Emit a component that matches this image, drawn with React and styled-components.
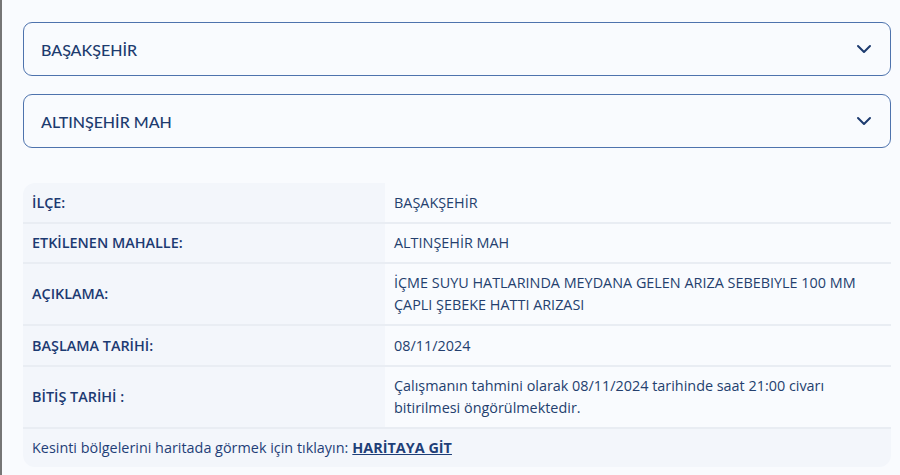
import React from 'react';
import styled, { createGlobalStyle } from 'styled-components';

const GlobalStyle = createGlobalStyle`
  body {
    margin: 0;
    background: #f9fbfe;
    font-family: 'Lato', 'Inter', sans-serif;
  }
`;

const Page = styled.div`
  min-height: 475px;
  box-sizing: border-box;
  border-left: 2px solid #767676;
  padding: 22px 9px 0 21px;
  background: #f9fbfe;
`;

const Select = styled.div`
  display: flex;
  align-items: center;
  justify-content: space-between;
  height: 54px;
  box-sizing: border-box;
  border: 1.5px solid #4e73ad;
  border-radius: 9px;
  padding: 0 18px 0 17px;
  margin-bottom: 18px;
  color: #1d3b6f;
  font-size: 16px;
  font-weight: 500;
`;

const Chevron = () => (
  <svg width="16" height="10" viewBox="0 0 16 10" fill="none">
    <path d="M2 2l6 6 6-6" stroke="#1d3b6f" strokeWidth="2" strokeLinecap="round" strokeLinejoin="round" />
  </svg>
);

const Table = styled.div`
  margin-top: 35px;
  display: grid;
  grid-template-columns: 362px 1fr;
  border-radius: 12px;
  overflow: hidden;
  color: #1d3b6f;
  font-family: 'Open Sans', sans-serif;
  font-size: 14.4px;
  line-height: 22px;
`;

const Label = styled.div`
  display: flex;
  align-items: center;
  min-height: ${p => p.h}px;
  box-sizing: border-box;
  padding: 0 9px;
  background: #f3f6fb;
  font-weight: 600;
  color: #1c3a72;
  border-bottom: 2px solid #e9edf3;
`;

const Value = styled.div`
  display: flex;
  align-items: center;
  min-height: ${p => p.h}px;
  box-sizing: border-box;
  padding: 0 20px 0 9px;
  background: #f9fbfe;
  border-bottom: 2px solid #e9edf3;
  color: #243f6e;
`;

const Footer = styled.div`
  grid-column: 1 / -1;
  display: flex;
  align-items: center;
  height: 38px;
  padding: 0 9px;
  background: #f3f6fb;
  color: #1f3f78;
`;

const MapLink = styled.a`
  margin-left: 4px;
  font-weight: 700;
  color: #1f3f78;
  text-decoration: underline;
`;

const rows = [
  ['İLÇE:', 'BAŞAKŞEHİR', 41],
  ['ETKİLENEN MAHALLE:', 'ALTINŞEHİR MAH', 40],
  ['AÇIKLAMA:', 'İÇME SUYU HATLARINDA MEYDANA GELEN ARIZA SEBEBIYLE 100 MM ÇAPLI ŞEBEKE HATTI ARIZASI', 62],
  ['BAŞLAMA TARİHİ:', '08/11/2024', 41],
  ['BİTİŞ TARİHİ :', 'Çalışmanın tahmini olarak 08/11/2024 tarihinde saat 21:00 civarı bitirilmesi öngörülmektedir.', 62],
];

export default function App() {
  return (
    <Page>
      <GlobalStyle />
      <Select>BAŞAKŞEHİR<Chevron /></Select>
      <Select>ALTINŞEHİR MAH<Chevron /></Select>
      <Table>
        {rows.map(([l, v, h]) => (
          <React.Fragment key={l}>
            <Label h={h}>{l}</Label>
            <Value h={h}>{v}</Value>
          </React.Fragment>
        ))}
        <Footer>
          Kesinti bölgelerini haritada görmek için tıklayın:
          <MapLink href="#">HARİTAYA GİT</MapLink>
        </Footer>
      </Table>
    </Page>
  );
}
